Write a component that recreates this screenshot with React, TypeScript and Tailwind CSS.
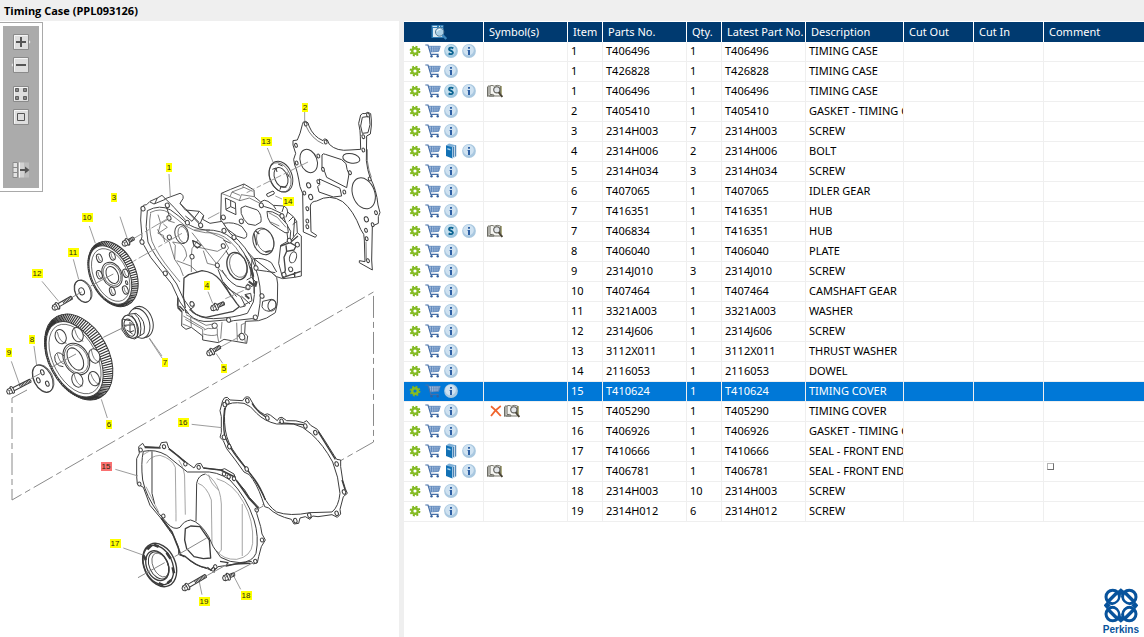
import type { ReactNode } from "react";

type Row = {
  item: number;
  part: string;
  latest?: string;
  qty: number;
  desc: string;
  extra?: "service" | "book";
  replaced?: boolean;
  lookup?: boolean;
};

const rows: Row[] = [
  { item: 1, part: "T406496", qty: 1, desc: "TIMING CASE", extra: "service" },
  { item: 1, part: "T426828", qty: 1, desc: "TIMING CASE" },
  { item: 1, part: "T406496", qty: 1, desc: "TIMING CASE", extra: "service", lookup: true },
  { item: 2, part: "T405410", qty: 1, desc: "GASKET - TIMING CASE" },
  { item: 3, part: "2314H003", qty: 7, desc: "SCREW" },
  { item: 4, part: "2314H006", qty: 2, desc: "BOLT", extra: "book" },
  { item: 5, part: "2314H034", qty: 3, desc: "SCREW" },
  { item: 6, part: "T407065", qty: 1, desc: "IDLER GEAR" },
  { item: 7, part: "T416351", qty: 1, desc: "HUB" },
  { item: 7, part: "T406834", latest: "T416351", qty: 1, desc: "HUB", extra: "service", lookup: true },
  { item: 8, part: "T406040", qty: 1, desc: "PLATE" },
  { item: 9, part: "2314J010", qty: 3, desc: "SCREW" },
  { item: 10, part: "T407464", qty: 1, desc: "CAMSHAFT GEAR" },
  { item: 11, part: "3321A003", qty: 1, desc: "WASHER" },
  { item: 12, part: "2314J606", qty: 1, desc: "SCREW" },
  { item: 13, part: "3112X011", qty: 1, desc: "THRUST WASHER" },
  { item: 14, part: "2116053", qty: 1, desc: "DOWEL" },
  { item: 15, part: "T410624", qty: 1, desc: "TIMING COVER" },
  { item: 15, part: "T405290", qty: 1, desc: "TIMING COVER", replaced: true, lookup: true },
  { item: 16, part: "T406926", qty: 1, desc: "GASKET - TIMING COVER" },
  { item: 17, part: "T410666", qty: 1, desc: "SEAL - FRONT END", extra: "book" },
  { item: 17, part: "T406781", qty: 1, desc: "SEAL - FRONT END", extra: "book", lookup: true },
  { item: 18, part: "2314H003", qty: 10, desc: "SCREW" },
  { item: 19, part: "2314H012", qty: 6, desc: "SCREW" },
];

const selectedPart = "T410624";

/* ---------- table icons ---------- */

function GearIcon() {
  return (
    <svg width="12" height="12" viewBox="0 0 12 12">
      <circle cx="6" cy="6" r="4.4" fill="none" stroke="#7cb518" strokeWidth="2" strokeDasharray="1.9 1.55" />
      <circle cx="6" cy="6" r="2.8" fill="none" stroke="#86bc25" strokeWidth="2.4" />
    </svg>
  );
}

function CartIcon() {
  return (
    <svg width="16" height="14" viewBox="0 0 16 14" fill="none">
      <path d="M4 2H15.3L13.6 7.2L5.4 8Z" fill="#c3d6ec" />
      <path d="M0.3 1H3L5.8 10.3H13.6" stroke="#456fa8" strokeWidth="1.2" />
      <path d="M3.6 2.3H15.3L13.6 7.4L5.2 8M4.2 4.1H14.8M4.8 6H14.2M6.5 2.3V8M8.8 2.3V8M11 2.3V8M13.1 2.3V7.5" stroke="#5680b8" strokeWidth="0.8" />
      <circle cx="6.5" cy="12.3" r="1.2" fill="#35609c" />
      <circle cx="12.7" cy="12.3" r="1.2" fill="#35609c" />
    </svg>
  );
}

function InfoIcon() {
  return (
    <svg width="14" height="14" viewBox="0 0 14 14">
      <circle cx="7" cy="7" r="6.9" fill="#a9c8e0" />
      <circle cx="6.5" cy="6" r="5.3" fill="#cfe2f1" />
      <path d="M6 3H8V4.7H6ZM5.6 6H8V11H6V7H5.6Z" fill="#2d5fa3" />
    </svg>
  );
}

function ServiceIcon() {
  return (
    <svg width="14" height="14" viewBox="0 0 14 14">
      <circle cx="7" cy="7" r="6.9" fill="#9fc6df" />
      <circle cx="6.5" cy="6" r="5.3" fill="#c5dfee" />
      <path d="M9.3 4.4Q7.6 3.2 5.9 3.9Q4.3 4.9 5.7 6.2L8.1 7.4Q9.8 8.8 8 9.9Q6.2 10.5 4.6 9.4" fill="none" stroke="#0a6391" strokeWidth="1.9" />
    </svg>
  );
}

function BookIcon() {
  return (
    <svg width="12" height="16" viewBox="0 0 12 16">
      <path d="M1 2.4L4 0.6L10.8 2.2V13.5L7.6 15.4Z" fill="#7eb0d8" />
      <path d="M1 2.4L7.4 4.2V15.4L1 13Z" fill="#1271b5" />
      <path d="M7.4 4.2L10.8 2.2V13.4L7.4 15.4Z" fill="#cfe0ee" />
      <path d="M8.6 4V14M10.7 2.3V13.4" stroke="#2c6ea8" strokeWidth="0.9" />
      <path d="M2.4 5L5.5 5.9V7.5L2.4 6.6Z" fill="#a8d2ee" />
    </svg>
  );
}

function LookupIcon() {
  return (
    <svg width="16" height="14" viewBox="0 0 16 14" fill="none">
      <path d="M1 2H2.6Q5 0.7 7.3 2.2Q10 0.6 13.5 2V12H1Z" fill="#f6f6f2" stroke="#77776c" />
      <path d="M3 2V10.6Q5.6 9.8 7.3 11.4M2 12H7M0.6 3V12.7" stroke="#66665e" />
      <circle cx="9.8" cy="5.8" r="3.1" fill="#e4e7ea" stroke="#5c5c58" strokeWidth="1.1" />
      <path d="M11.8 8.4L15.3 13" stroke="#4b4637" strokeWidth="2" />
      <path d="M14.2 2V10" stroke="#8d8b50" />
    </svg>
  );
}

function CrossIcon() {
  return (
    <svg width="12" height="12" viewBox="0 0 12 12">
      <path d="M1 1.2Q6 5 10.8 11M10.8 1Q5 5 1 11" fill="none" stroke="#f0642c" strokeWidth="1.7" />
    </svg>
  );
}

function PreviewIcon() {
  return (
    <svg width="16" height="16" viewBox="0 0 16 16">
      <path d="M0.5 1H12.5V14H0.5Z" fill="#2f7db5" />
      <path d="M2 4H11.5V13H2Z" fill="#dcebf5" />
      <path d="M1.5 2.4H6M8 2.4H9M10.5 2.4H11.5" stroke="#e9f4fb" />
      <circle cx="8.6" cy="8" r="4.2" fill="#a9cfe6" stroke="#5d7f98" />
      <path d="M6 7.5Q7 5 9.5 5.2" stroke="#fff" fill="none" />
      <path d="M11.5 11L15.3 15" stroke="#3d87bd" strokeWidth="2.4" />
    </svg>
  );
}

function Slot({ children }: { children: ReactNode }) {
  return <span className="flex w-[18px] items-center justify-center">{children}</span>;
}

/* ---------- drawing toolbar ---------- */

function ToolButton({ label, children, className }: { label: string; children: ReactNode; className?: string }) {
  return (
    <button type="button" aria-label={label} className={className}>
      <svg width="20" height="16" viewBox="0 0 20 16" fill="none">
        {children}
      </svg>
    </button>
  );
}

const plate = (
  <>
    <path d="M2.5 0.5H17.5V15.5H2.5Z" fill="#dedede" stroke="#8a8a8a" />
    <path d="M3.5 14.5V1.5H16.5" stroke="#f6f6f6" />
  </>
);

function Toolbar() {
  return (
    <div className="absolute top-px left-0 border border-l-0 border-[#a9a9a9] bg-white p-[3px]">
      <div className="flex w-9 flex-col items-center bg-[#ababab] pt-2 pb-[10px]">
        <ToolButton label="Zoom in">
          <path d="M17 5L19.5 8L17 11Z" fill="#e8e8e8" />
          {plate}
          <path d="M5 8H15M10 3V13" stroke="#555" strokeWidth="2" />
        </ToolButton>
        <ToolButton label="Zoom out" className="mt-[7px]">
          <path d="M3 5L0.5 8L3 11Z" fill="#e8e8e8" />
          {plate}
          <path d="M5 8H15" stroke="#555" strokeWidth="2" />
        </ToolButton>
        <ToolButton label="Show all" className="mt-[13px]">
          {plate}
          <path d="M4.5 2.5H7.5V5.5H4.5ZM12.5 2.5H15.5V5.5H12.5ZM4.5 10.5H7.5V13.5H4.5ZM12.5 10.5H15.5V13.5H12.5Z" fill="#888" stroke="#606060" />
        </ToolButton>
        <ToolButton label="Fit page" className="mt-[7px]">
          {plate}
          <path d="M6.5 4.5H13.5V11.5H6.5Z" stroke="#555" />
        </ToolButton>
        <ToolButton label="Hide panel" className="mt-[37px]">
          <path d="M2 0.5H6.5V15.5H2ZM2 5.5H6.5M2 10.5H6.5" fill="#e2e2e2" stroke="#8a8a8a" />
          <path d="M8 0.5H13V15.5H8Z" fill="#d2d2d2" />
          <path d="M13 0.5H18V15.5H13Z" fill="#bcbcbc" />
          <path d="M8.5 0.5V15.5" stroke="#f4f4f4" />
          <path d="M9 8H15" stroke="#555" strokeWidth="2" />
          <path d="M14 4.5L18.5 8L14 11.5Z" fill="#555" />
        </ToolButton>
      </div>
    </div>
  );
}

/* ---------- exploded view ---------- */

type Oval = { cx: number; cy: number; rx: number; ry: number; rot: number };

function Ellipse({ cx, cy, rx, ry, rot, fill = "none", w }: Oval & { fill?: string; w?: number }) {
  return <ellipse cx={cx} cy={cy} rx={rx} ry={ry} transform={`rotate(${rot} ${cx} ${cy})`} fill={fill} strokeWidth={w} />;
}

function pointOn(o: Oval, t: number) {
  const r = (o.rot * Math.PI) / 180;
  const x = o.rx * Math.cos(t);
  const y = o.ry * Math.sin(t);
  return [o.cx + x * Math.cos(r) - y * Math.sin(r), o.cy + x * Math.sin(r) + y * Math.cos(r)];
}

// gear rim: teeth run from the front face to the outer edge
function Rim({ outer, inner, teeth }: { outer: Oval; inner: Oval; teeth: number }) {
  const d = Array.from({ length: teeth }, (_, i) => {
    const t = (i / teeth) * Math.PI * 2;
    const a = pointOn(outer, t);
    const b = pointOn(inner, t);
    return `M${a[0].toFixed(1)} ${a[1].toFixed(1)}L${b[0].toFixed(1)} ${b[1].toFixed(1)}`;
  }).join("");
  return (
    <>
      <Ellipse {...outer} fill="#fff" w={3} />
      <path d={d} strokeWidth="3.4" stroke="#333" />
      <Ellipse {...inner} fill="#fff" w={3} />
    </>
  );
}

function Holes({ points, rx = 4, ry = 6 }: { points: number[][]; rx?: number; ry?: number }) {
  return (
    <>
      {points.map(([x, y]) => (
        <Ellipse key={`${x}-${y}`} cx={x} cy={y} rx={rx} ry={ry} rot={-20} fill="#fff" w={3} />
      ))}
    </>
  );
}

// bolt drawn from its head along the given angle
function Bolt({ x, y, len, rot }: { x: number; y: number; len: number; rot: number }) {
  return (
    <g transform={`translate(${x} ${y}) rotate(${rot})`}>
      <path d={`M6 -5H${len}Q${len + 4} 0 ${len} 5H6Z`} fill="#fff" />
      <path d={`M${len * 0.45} 0H${len}`} strokeWidth="9" strokeDasharray="2.5 2" stroke="#333" />
      <ellipse cx="5" cy="0" rx="5" ry="11" fill="#fff" />
      <path d="M3 -8L-7 -8L-12 -3V4L-7 8H3Z" fill="#fff" />
      <path d="M-7 -8L-4 -2L-7 8M-4 -2H4" strokeWidth="2" />
    </g>
  );
}

const callouts: [string, number, number][] = [
  ["1", 169, 168], ["2", 305, 108], ["3", 114, 198], ["4", 207, 286], ["5", 224, 369],
  ["6", 109, 425], ["7", 165, 363], ["8", 32, 340], ["9", 9, 353], ["10", 87, 218],
  ["11", 73, 253], ["12", 37, 274], ["13", 266, 142], ["14", 288, 202], ["15", 106, 467],
  ["16", 183, 423], ["17", 115, 544], ["18", 246, 596], ["19", 204, 602],
];

function ExplodedView() {
  return (
    <svg width="399" height="616" viewBox="0 21 399 616" role="img" aria-label="Timing case parts" fill="none" strokeLinejoin="round">
      {/* assembly frame */}
      <path d="M27 390L12 398V500L373.500 292V442L257 508" stroke="#8a8a8a" strokeWidth="1" strokeDasharray="22 4 6 4" />

      {/* rear gasket, timing case */}
      <g transform="translate(120 90) scale(.33333)" stroke="#3c3c3c" strokeWidth="3">
        <path
          d="M547 104Q548 93 557 94Q566 96 567 108Q580 140 609 152Q612 143 622 150L628 163Q650 185 690 180L722 178L721 140L720 122L716 100L722 75Q728 68 735 71Q743 63 752 71L754 90V108L751 132L740 138L739 212Q742 240 750 262Q770 300 774 345L780 368L775 380V400L757 408L755 510L757 540L718 518V512L735 515L733 450Q735 432 722 418Q700 360 668 335Q630 310 590 333Q573 334 571 348L573 425L590 436L586 442L550 426L548 310L540 290Q532 240 524 225L521 208L527 190L519 165V152L532 150Q541 132 547 104Z"
          fill="#fff"
        />
        <path d="M558 108Q574 146 610 162M742 178V212Q746 244 754 262M738 455L739 512" strokeWidth="2" />
        <Ellipse cx={566} cy={213} rx={25} ry={36} rot={-20} />
        <Ellipse cx={731} cy={310} rx={33} ry={48} rot={-20} />
        <Ellipse cx={694} cy={205} rx={26} ry={14} rot={12} />
        <path d="M606 195Q609 189 616 193L665 209L678 221Q680 240 687 252L680 293L620 262L614 245L606 232Z" />
        <path d="M598 267L660 295L665 318L640 321L597 306L593 290L599 284Z" />
        <path d="M727 82L748 79L750 104L744 128L727 130L722 108Z" />
        <Holes points={[[557, 102], [528, 166], [617, 156], [730, 140], [744, 75], [730, 180], [530, 219], [595, 198], [609, 238], [595, 275], [690, 248], [673, 306], [749, 267], [553, 309], [562, 356], [562, 393], [562, 410], [768, 368], [758, 404], [740, 446], [744, 512], [738, 421]]} />
        <Holes points={[[566, 286], [572, 321], [739, 388]]} rx={6} ry={8} />

        {/* thrust washer and dowel */}
        <Ellipse cx={483} cy={260} rx={33} ry={48} rot={-22} fill="#fff" />
        <Ellipse cx={480} cy={262} rx={31} ry={46} rot={-22} w={2} />
        <Ellipse cx={483} cy={262} rx={19} ry={31} rot={-22} fill="#fff" />
        <path d="M457 238L468 234L471 246M499 292L483 289L480 299M474 222L488 228M502 250L508 262" />
        <path d="M440 312L459 303Q465 306 462 312L445 320Q439 319 440 312Z" fill="#fff" />
      </g>

      {/* case */}
      <g transform="translate(130 180) scale(.33333)" stroke="#444" strokeWidth="3">
        {/* sump side and lower casting */}
        <path
          d="M144 348L142 376L156 396L155 438L168 448L184 442L218 468V480L265 488L282 478L350 490L353 468L344 460L346 424L386 422L410 414L436 398L442 370L443 312L440 292L424 275L372 236L150 300Z"
          fill="#fff"
        />
        <path d="M168 404L228 436L250 432M160 408L224 446M158 432L182 442M182 412L184 440M166 418L218 448V470M222 450Q236 442 244 446L262 444M220 462Q246 470 262 464L262 446M262 464L266 486M276 426L272 476M320 428L322 482M344 430L334 434V460L322 468M322 468L344 474L346 488" strokeWidth="2" />
        <path d="M144 350V384L156 396M150 344L158 372M148 378L162 392M164 380Q170 372 178 382L182 400L168 398Z" strokeWidth="4" />
        <Ellipse cx={254} cy={437} rx={8} ry={8} rot={0} fill="#fff" />
        <Ellipse cx={336} cy={470} rx={8} ry={10} rot={-20} fill="#fff" />
        <path d="M398 364L424 358Q442 362 438 382L418 394Q400 392 396 380Z" fill="#fff" />
        <Ellipse cx={426} cy={376} rx={12} ry={17} rot={10} />

        {/* pump side housing */}
        <path
          d="M272 120L274 40L302 28L342 12L372 30L373 50L392 66Q402 56 414 64L430 76L462 78Q474 84 473 96L490 110L500 124L502 158L514 168V288L494 292L458 296L440 290L372 236L300 160Z"
          fill="#fff"
        />
        <path d="M274 40L300 50L330 62L358 54L390 70M300 50L306 36L342 22L368 34M328 62L334 44L372 50M306 36L330 46M342 12L338 22" strokeWidth="2" />
        <path d="M286 54L316 68L318 104L288 90ZM288 88L302 80L316 86M302 80V62" fill="#fff" />
        <path d="M390 70L404 80L424 86L458 102L468 130L482 154L480 180L452 196L446 250L458 294" />
        <path d="M392 66L396 76M430 76L438 88M462 78L456 96M473 96L468 112M490 110L476 124M500 124L488 134M494 116L490 170M502 158L482 182M470 150L474 182" />
        <path d="M452 198L480 188L498 198L492 210L470 214L462 232L466 270L460 292L512 274M470 214L468 196M480 188L504 168M494 292V276" strokeWidth="4" />
        <Ellipse cx={489} cy={232} rx={10} ry={17} rot={18} fill="#fff" />
        <path d="M333 84L346 78L382 90Q396 104 393 126L376 136L354 132L342 118Q330 100 333 84Z" fill="#fff" />
        <path d="M411 94Q426 92 446 105L472 134L475 158L465 158L446 146L422 130Q410 114 411 94Z" fill="#fff" />
        <path d="M416 98L442 112L468 142M422 126L448 138" strokeWidth="2" />
        <path d="M280 130Q312 124 336 140L350 160Q352 174 342 175L320 168L290 146Z" fill="#fff" />
        <path d="M372 236Q400 232 424 248L440 276M372 236L382 270L410 274L436 278" />

        {/* front flange */}
        <path
          d="M34 84Q40 72 50 74L60 64L82 54L96 46L106 56L150 40Q162 44 159 56L150 70L166 90L208 94L221 106L218 118L240 130L276 124L300 160Q352 196 376 262Q396 320 390 370L384 410Q376 422 366 416L310 422Q296 430 286 420L240 424Q202 428 178 404L150 366L125 312L100 280L62 232L42 196L32 186L36 170L32 120Z"
          fill="#fff"
        />
        <path d="M52 92Q90 72 122 90Q148 108 168 128Q192 146 226 150Q276 148 306 176Q350 214 362 272Q380 322 370 366L352 400Q310 414 250 416Q206 416 186 392L160 356L140 312L116 278Q72 226 54 186Q44 140 52 92Z" />
        <path d="M60 98Q92 82 116 98Q142 118 164 136Q192 156 226 158Q270 156 298 182Q340 220 352 278M62 100Q54 140 66 184Q84 226 122 272L150 306" strokeWidth="2" />
        <path d="M60 66L72 72L106 58M150 70L208 128M104 54L132 82L166 120M168 90L208 132M82 54L74 72M108 76L118 108M166 108L186 124L208 94M221 106L208 136" />

        {/* oil pan opening */}
        <path d="M166 384L160 348L162 294L176 284L216 272Q252 276 272 302L320 370L328 380L310 394L228 412Q196 408 180 388" strokeWidth="4" />
        <path d="M284 318L304 332L332 350L346 378L330 382M280 306L304 352M180 366Q194 362 192 380L178 390" />

        {/* ribs */}
        <path d="M84 104L92 130L84 160L100 166L104 186M120 114L94 130M114 122L134 128M88 158L112 142L100 132M82 148L96 170L118 186L134 238L136 196L128 186L150 190Q168 202 170 228L160 244M134 238L150 262L160 288M184 228L184 276M140 242L182 258L202 276M196 200L262 214L280 204M228 152L280 176L296 204L260 250M186 158L262 254M192 150L240 150M204 180L186 206L184 230M262 262L290 288M220 212L232 250L256 256" strokeWidth="2" />
        <path d="M280 180L302 190M288 212L296 226M264 268L278 304L320 350M276 270Q290 300 320 318L348 324M346 226Q372 262 370 300M350 300L364 292L378 306L366 320L352 312L348 330M344 344L362 340L366 362L340 376M334 348L360 372M366 240L362 290M372 300V340" />
        <path d="M356 304L372 316M346 346L358 356M362 260L370 290M380 304L376 320" strokeWidth="6" />
        <Ellipse cx={155} cy={162} rx={20} ry={29} rot={-15} fill="#fff" />
        <Ellipse cx={159} cy={164} rx={14} ry={25} rot={-15} w={2} />
        <path d="M188 182L202 188L213 196L202 204L192 196Z" strokeWidth="4" />
        <Ellipse cx={321} cy={258} rx={29} ry={42} rot={-18} fill="#fff" w={4} />
        <Ellipse cx={325} cy={256} rx={25} ry={37} rot={-18} w={2} />
        <Ellipse cx={400} cy={184} rx={30} ry={41} rot={-20} fill="#fff" />
        <Ellipse cx={406} cy={182} rx={25} ry={36} rot={-20} w={2} />
        <path d="M376 152L388 162M406 216L422 212M372 160L380 196" strokeWidth="4" />
        <Holes
          points={[[39, 86], [112, 76], [36, 186], [106, 280], [172, 128], [212, 136], [282, 152], [280, 112], [334, 124], [312, 172], [280, 198], [262, 256], [186, 230], [118, 172], [117, 114], [378, 264], [456, 108], [394, 76], [478, 182], [462, 284], [482, 268], [502, 194], [376, 412], [296, 420], [396, 348], [354, 322], [186, 372]]}
          rx={6}
          ry={7}
        />
      </g>

      <g transform="translate(120 90) scale(.33333)" stroke="#3c3c3c" strokeWidth="3">
        <path d="M147 252L151 320M442 174L459 216M554 62V94M466 318L486 327M264 605L278 640M0 380L22 446M288 790L308 820M88 744L126 798" stroke="#888" strokeWidth="2.500" />
        <path d="M564 216L380 308M298 368L264 386M186 430L40 514M146 384L42 445M316 626L392 592M300 772L362 738" stroke="#999" strokeWidth="3" strokeDasharray="60 8 14 8" />
        <Bolt x={18} y={458} len={26} rot={-30} />
        <Bolt x={284} y={652} len={30} rot={-24} />
        <Bolt x={272} y={787} len={32} rot={-30} />
      </g>

      {/* gears, hub, plate and washer */}
      <g transform="translate(0 200) scale(.33333)" stroke="#3c3c3c" strokeWidth="3">
        <Rim
          outer={{ cx: 339, cy: 222, rx: 68, ry: 103, rot: -25 }}
          inner={{ cx: 331, cy: 225, rx: 56, ry: 93, rot: -25 }}
          teeth={84}
        />
        <Ellipse cx={332} cy={225} rx={50} ry={84} rot={-25} w={2} />
        <Ellipse cx={336} cy={224} rx={29} ry={39} rot={-25} />
        <Ellipse cx={336} cy={224} rx={25} ry={34} rot={-25} w={2} />
        <Ellipse cx={337} cy={225} rx={17} ry={27} rot={-25} />
        <Holes points={[[298, 175], [337, 168], [377, 220], [376, 270], [337, 274], [298, 224]]} rx={8} ry={13} />
        <path d="M294 168Q296 182 304 184M333 160Q335 176 344 178M373 212Q375 228 384 230M372 262Q374 278 383 280M333 266Q335 282 344 284M294 216Q296 232 305 234" strokeWidth="2" />
        <Holes points={[[380, 248]]} rx={3} ry={6} />

        <Rim
          outer={{ cx: 236, cy: 471, rx: 90, ry: 138, rot: -28 }}
          inner={{ cx: 224, cy: 478, rx: 72, ry: 122, rot: -28 }}
          teeth={104}
        />
        <Ellipse cx={225} cy={477} rx={65} ry={113} rot={-28} w={2} />
        <Ellipse cx={229} cy={477} rx={37} ry={50} rot={-28} />
        <Ellipse cx={229} cy={477} rx={33} ry={45} rot={-28} w={2} />
        <Ellipse cx={226} cy={477} rx={21} ry={36} rot={-28} />
        <Holes points={[[182, 410], [233, 404], [283, 468], [282, 536], [232, 540]]} rx={16} ry={22} />
        <path d="M190 500Q164 498 164 470Q168 454 182 460L192 468" />
        <path d="M172 396Q178 428 200 430M224 388Q232 420 250 424M274 450Q280 484 298 486M272 520Q282 550 298 552M222 522Q230 556 248 558M172 462Q180 490 192 492" strokeWidth="2" />

        {/* hub */}
        <Ellipse cx={425} cy={366} rx={33} ry={48} rot={-18} fill="#fff" />
        <Ellipse cx={417} cy={370} rx={31} ry={46} rot={-18} fill="#fff" />
        <path d="M385 343L408 340Q440 360 432 400L404 417L380 410L366 390V358Z" fill="#fff" />
        <Ellipse cx={391} cy={380} rx={22} ry={36} rot={-22} fill="#fff" />
        <Ellipse cx={389} cy={383} rx={15} ry={27} rot={-22} />
        <path d="M404 342Q430 362 420 408M395 346Q416 366 412 410M370 358L390 362M372 376L404 374M390 366V396L402 392M380 390L398 402" />

        {/* plate 8, washer 11 */}
        <Ellipse cx={128} cy={536} rx={27} ry={44} rot={-27} fill="#fff" />
        <Ellipse cx={130} cy={535} rx={28} ry={44} rot={-27} w={2} />
        <Holes points={[[127, 517], [115, 541], [142, 551]]} rx={5} ry={8} />
        <Ellipse cx={248} cy={274} rx={23} ry={35} rot={-25} fill="#fff" />
        <Ellipse cx={250} cy={273} rx={24} ry={35} rot={-25} w={2} />
        <Holes points={[[245, 274]]} rx={8} ry={11} />

        <path d="M268 78L286 130M220 178L236 238M126 244L176 304M102 438L110 496M34 484L58 552M448 416L486 474M304 598L322 654" stroke="#888" strokeWidth="2.500" />
        <path d="M400 368L310 412M340 222L272 258M245 276L218 291M228 462L150 504M126 518L92 536" stroke="#888" strokeWidth="3" />
        <Bolt x={168} y={320} len={54} rot={-30} />
        <Bolt x={32} y={572} len={66} rot={-27} />
      </g>

      {/* front gasket, cover, seal */}
      <g transform="translate(90 380) scale(.33333)" stroke="#3c3c3c" strokeWidth="3">
        <path
          d="M398 62Q402 50 412 52L420 60L458 62Q466 46 478 52L486 66Q500 92 524 104Q532 98 542 106L562 122Q566 110 576 112L590 122Q620 120 640 128L650 122L662 136L682 148Q704 180 732 226L740 238L752 240V260L758 300L766 326L772 340L760 350L750 388L752 402L742 412L726 404L684 410L668 408L660 418L646 410L630 414L626 430L612 432L604 418Q560 408 536 384L524 380L516 356Q500 310 478 284L462 276L436 240L410 206L400 182L390 172L394 158V110L390 92Z"
          fill="#fff"
        />
        <path d="M408 78Q420 64 462 70Q482 76 500 100Q524 124 560 132L610 132Q640 138 664 162Q700 194 728 246Q746 290 750 340Q746 380 726 396L660 398Q600 410 560 396Q534 378 520 346Q504 312 476 274L440 226Q412 190 406 150Q400 104 408 78Z" fill="#fff" />
        <path d="M404 84Q398 130 404 168Q420 206 446 238L480 280Q510 316 526 360M486 70Q502 96 526 110M566 128L640 134M684 154L736 238M756 300L766 332" strokeWidth="4" />
        <Holes points={[[404, 74], [412, 66], [472, 62], [532, 114], [575, 124], [646, 138], [676, 158], [740, 252], [762, 336], [740, 400], [658, 406], [616, 422], [470, 267], [402, 172], [418, 200]]} rx={5} ry={7} />

        <path
          d="M146 200L158 190L164 200L208 202L214 188L230 186L236 204L262 226L282 242L290 248L312 264L320 252L332 250L340 264L392 270L404 266L432 282L438 300L464 330L478 352L506 382L500 400L512 440L516 462L526 480L514 500L506 530L502 548L490 552L484 544L412 556L384 560L370 574L352 566Q310 556 284 528L266 524V504L252 470L236 448L212 414L180 376L160 322L142 312L140 290V236L148 220Z"
          fill="#fff"
        />
        <path d="M236 206L262 226L292 252M340 264L392 270L436 292M164 202L212 204M440 302L478 356L504 384M214 414L246 456L262 496L272 524L284 530" strokeWidth="5" />
        <path d="M160 214Q196 206 230 226Q262 252 292 276L336 276Q380 272 420 300Q470 352 492 420Q508 470 498 520Q488 546 450 548Q420 548 392 532Q366 500 356 470Q330 426 302 420Q282 422 270 442Q252 452 232 430L206 400Q168 350 158 300Q152 250 160 214Z" />
        <path d="M186 214V340L194 372M318 424L320 310Q324 286 346 282" />
        <path d="M170 250Q180 228 210 226Q246 236 256 262L258 400V424M160 224Q184 208 186 214M266 240Q286 270 284 300L286 404M168 320L206 396M346 282Q362 288 372 304Q392 330 394 372V510L384 522M324 310Q350 318 364 360L366 490M356 284Q360 310 386 330M380 296Q430 310 460 366M460 366Q492 420 488 490Q484 530 440 538Q400 540 380 512" strokeWidth="2" stroke="#777" />
        <path d="M457 372V528" strokeWidth="4" stroke="#bbb" />
        <path d="M286 446L302 438L330 440L344 460L358 480L362 534L340 536L312 530L290 506L284 480Z" fill="#fff" strokeWidth="4" />
        <path d="M284 528Q320 560 350 564M352 562L362 570L376 556L372 578M390 544L414 548L408 558L436 552L482 550" strokeWidth="4" />
        <Holes points={[[152, 210], [222, 200], [326, 262], [148, 312], [220, 408], [286, 252], [402, 282], [416, 290], [432, 296], [500, 390], [516, 480], [496, 544], [376, 560]]} rx={5} ry={6} />

        <Ellipse cx={209} cy={555} rx={47} ry={68} rot={-24} fill="#fff" w={4} />
        <Ellipse cx={205} cy={555} rx={42} ry={62} rot={-24} w={4} />
        <Ellipse cx={202} cy={557} rx={32} ry={47} rot={-24} w={4} />
        <Ellipse cx={206} cy={556} rx={28} ry={43} rot={-24} w={3} />
        <Ellipse cx={211} cy={555} rx={22} ry={38} rot={-24} w={2} />
        <path d="M172 508L184 496M192 494L206 500M230 518L242 536M248 562L252 580M244 600L232 610M168 540L160 526M206 610L220 616" strokeWidth="8" />

        <path d="M305 133L396 143M76 268L144 288M100 504L156 524M328 606L336 644M428 582L452 628" stroke="#888" strokeWidth="2.500" />
        <path d="M350 474L254 530M224 548L144 593M414 552L352 586M490 548L432 578M520 378L498 390" stroke="#888" strokeWidth="3" />
        <Bolt x={288} y={622} len={68} rot={-30} />
        <Bolt x={410} y={592} len={24} rot={-22} />
      </g>

      {callouts.map(([n, x, y]) => (
        <g key={n}>
          <rect x={n.length > 1 ? x - 5 : x - 3} y={y - 5} width={n.length > 1 ? 11 : 6} height="9" fill={n === "15" ? "#fa7070" : "#ffff00"} />
          <text x={x} y={y + 2} textAnchor="middle" className="font-[Liberation_Sans,sans-serif] text-[8px]" fill="#2a2a10">
            {n}
          </text>
        </g>
      ))}
    </svg>
  );
}

function PerkinsLogo() {
  const rings = [
    [26, 26, 1],
    [75, 26, -1],
    [26, 77, -1],
    [75, 77, 1],
  ];
  return (
    <div className="flex flex-col items-center text-[#08539c]">
      <svg width="34" height="35" viewBox="0 0 101 103" fill="none" stroke="currentColor">
        {rings.map(([x, y, s]) => (
          <g key={`${x}-${y}`} strokeWidth="9">
            <circle cx={x} cy={y} r="20" />
            <path d={`M${x - 13} ${y + 13 * s}L${x + 13} ${y - 13 * s}`} strokeWidth="10" />
          </g>
        ))}
        <path d="M40 9L50 0L61 9L50 22ZM40 94L50 103L61 94L50 81ZM8 41L-1 51L8 62L20 51ZM93 41L102 51L93 62L81 51Z" fill="currentColor" stroke="none" />
        <path d="M50 24Q54 47 78 51Q54 55 50 80Q46 55 22 51Q46 47 50 24Z" fill="#fff" stroke="none" />
      </svg>
      <span className="font-[Liberation_Sans,sans-serif] text-[10px] leading-[14px] font-bold">Perkins</span>
    </div>
  );
}

const headings = ["Symbol(s)", "Item", "Parts No.", "Qty.", "Latest Part No.", "Description", "Cut Out", "Cut In", "Comment"];

function PartsTable() {
  const cell = "h-5 overflow-hidden border-r border-b border-[#efefef] p-0 pb-[2px] pl-[3px] whitespace-nowrap last:border-r-0";

  return (
    <table className="w-full table-fixed border-separate border-spacing-0 text-left">
      <colgroup>
        <col className="w-20" />
        <col className="w-[84px]" />
        <col className="w-[35px]" />
        <col className="w-[84px]" />
        <col className="w-[35px]" />
        <col className="w-[84px]" />
        <col className="w-[98px]" />
        <col className="w-[70px]" />
        <col className="w-[70px]" />
        <col />
      </colgroup>
      <thead>
        <tr className="bg-[#003a70] text-white">
          <th className="h-5 border-r border-white p-0" aria-label="Actions">
            <div className="flex justify-center pr-[10px]">
              <PreviewIcon />
            </div>
          </th>
          {headings.map((h) => (
            <th key={h} className="h-5 border-r border-white p-0 pl-[5px] font-normal whitespace-nowrap last:border-r-0">
              {h}
            </th>
          ))}
        </tr>
      </thead>
      <tbody>
        {rows.map((row, i) => (
          <tr key={i} className={row.part === selectedPart ? "bg-[#0078d7] text-white" : "text-black"}>
            <td className={cell}>
              <div className="-ml-px flex h-4 items-center">
                <Slot><GearIcon /></Slot>
                <Slot><CartIcon /></Slot>
                {row.extra === "service" && <Slot><ServiceIcon /></Slot>}
                {row.extra === "book" && <Slot><BookIcon /></Slot>}
                <Slot><InfoIcon /></Slot>
              </div>
            </td>
            <td className={cell}>
              <div className="flex items-center">
                {row.replaced && <span className="flex w-[17px] justify-center"><CrossIcon /></span>}
                {row.lookup && <LookupIcon />}
              </div>
            </td>
            <td className={cell}>{row.item}</td>
            <td className={cell}>{row.part}</td>
            <td className={cell}>{row.qty}</td>
            <td className={cell}>{row.latest ?? row.part}</td>
            <td className={cell}>{row.desc}</td>
            <td className={cell}></td>
            <td className={cell}></td>
            <td className={cell}>
              {row.part === "T406781" && (
                <div className="flex h-4 items-start">
                  <span className="h-[7px] w-[7px] border border-t-[#b5b5b5] border-r-[#707070] border-b-[#707070] border-l-[#b5b5b5] bg-white" />
                </div>
              )}
            </td>
          </tr>
        ))}
      </tbody>
    </table>
  );
}

export default function App() {
  return (
    <div className="flex min-h-screen flex-col bg-[#efefef] font-['Noto_Sans',sans-serif] text-[11px] leading-4 text-black">
      <h1 className="h-[21px] pt-[3px] pl-1 font-['Open_Sans',sans-serif] text-[11px] font-bold">Timing Case (PPL093126)</h1>
      <main className="flex flex-1">
        <section className="relative w-[399px] shrink-0 bg-white">
          <Toolbar />
          <ExplodedView />
        </section>
        <section className="ml-[5px] flex min-w-0 flex-1 flex-col bg-white pt-px">
          <PartsTable />
          <div className="mt-auto self-end pr-[5px]">
            <PerkinsLogo />
          </div>
        </section>
      </main>
    </div>
  );
}
